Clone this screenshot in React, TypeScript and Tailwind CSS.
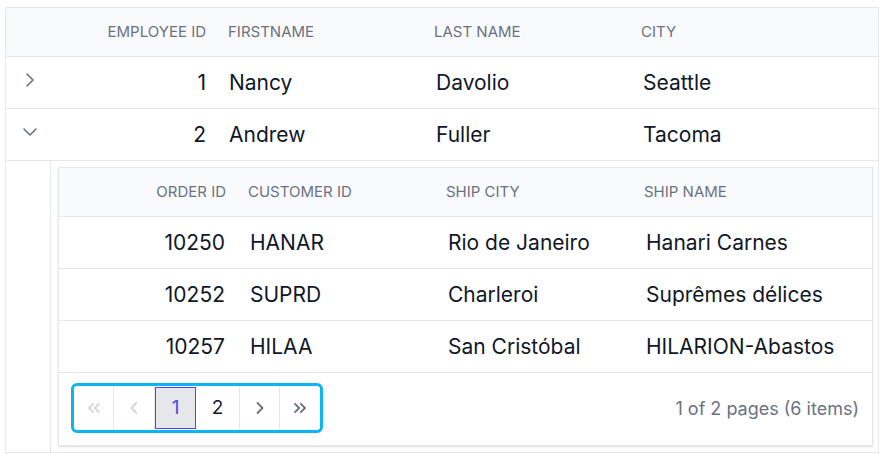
import React from "react";
import { ChevronRight, ChevronDown, ChevronLeft, ChevronsLeft, ChevronsRight } from "lucide-react";

const employees = [
  { id: 1, first: "Nancy", last: "Davolio", city: "Seattle", open: false },
  { id: 2, first: "Andrew", last: "Fuller", city: "Tacoma", open: true },
];

const orders = [
  { id: 10250, cust: "HANAR", city: "Rio de Janeiro", name: "Hanari Carnes" },
  { id: 10252, cust: "SUPRD", city: "Charleroi", name: "Suprêmes délices" },
  { id: 10257, cust: "HILAA", city: "San Cristóbal", name: "HILARION-Abastos" },
];

export default function App() {
  return (
    <div className="w-[880px] h-[454px] bg-white overflow-hidden" style={{ fontFamily: "Inter, 'Noto Sans', sans-serif" }}>
      <div className="mt-[7px] ml-[5px] w-[874px] border border-gray-200">
        {/* header */}
        <div className="flex h-[49px] items-center bg-gray-50 border-b border-gray-200 text-[15px] text-gray-500 uppercase">
          <div className="w-[44px] shrink-0" />
          <div className="w-[168px] shrink-0 text-right pr-3">Employee ID</div>
          <div className="w-[206px] shrink-0 pl-[10px]">FirstName</div>
          <div className="w-[207px] shrink-0 pl-[10px]">Last Name</div>
          <div className="flex-1 pl-[10px]">City</div>
        </div>
        {employees.map((e) => (
          <div key={e.id} className="flex h-[52px] items-center border-b border-gray-200 text-[21px] text-gray-900 pt-[1px]">
            <div className="w-[44px] shrink-0 flex justify-center pl-[3px] pb-[6px] text-gray-500">
              {e.open ? <ChevronDown size={24} strokeWidth={1.6} /> : <ChevronRight size={24} strokeWidth={1.6} />}
            </div>
            <div className="w-[168px] shrink-0 text-right pr-3">{e.id}</div>
            <div className="w-[206px] shrink-0 pl-[11px]">{e.first}</div>
            <div className="w-[207px] shrink-0 pl-3">{e.last}</div>
            <div className="flex-1 pl-3">{e.city}</div>
          </div>
        ))}
        {/* detail row */}
        <div className="flex">
          <div className="w-[44px] shrink-0" />
          <div className="flex-1 border-l border-gray-200 pl-[7px] pr-[5px] pt-[6px] pb-[6px]">
            <div className="border border-gray-200 shadow-sm">
              <div className="flex h-[49px] items-center bg-gray-50 border-b border-gray-200 text-[15px] text-gray-500 uppercase">
                <div className="w-[179px] shrink-0 text-right pr-3">Order ID</div>
                <div className="w-[198px] shrink-0 pl-[10px]">Customer ID</div>
                <div className="w-[198px] shrink-0 pl-[10px]">Ship City</div>
                <div className="flex-1 pl-[10px]">Ship Name</div>
              </div>
              {orders.map((o) => (
                <div key={o.id} className="flex h-[52px] items-center border-b border-gray-200 text-[21px] text-gray-900 pt-[1px]">
                  <div className="w-[179px] shrink-0 text-right pr-[13px]">{o.id}</div>
                  <div className="w-[198px] shrink-0 pl-3">{o.cust}</div>
                  <div className="w-[198px] shrink-0 pl-3">{o.city}</div>
                  <div className="flex-1 pl-3">{o.name}</div>
                </div>
              ))}
              <div className="flex h-[72px] items-center justify-between pl-3 pr-[13px] pb-[2px]">
                <div className="flex h-[50px] border-[3px] border-[#0bb4f2] rounded-[6px] overflow-hidden">
                  <div className="w-[40px] flex items-center justify-center border-r border-gray-200 text-gray-300">
                    <ChevronsLeft size={20} strokeWidth={2.2} />
                  </div>
                  <div className="w-[41px] flex items-center justify-center border-r border-gray-200 text-gray-300">
                    <ChevronLeft size={20} strokeWidth={2.2} />
                  </div>
                  <div className="w-[41px] my-[1px] flex items-center justify-center border border-[#4f46e5] bg-gray-200 text-[#4f46e5] text-[19px]">
                    1
                  </div>
                  <div className="w-[44px] flex items-center justify-center border-r border-gray-200 text-gray-900 text-[19px]">
                    2
                  </div>
                  <div className="w-[40px] flex items-center justify-center border-r border-gray-200 text-gray-500">
                    <ChevronRight size={20} strokeWidth={2.2} />
                  </div>
                  <div className="w-[40px] flex items-center justify-center text-gray-500">
                    <ChevronsRight size={20} strokeWidth={2.2} />
                  </div>
                </div>
                <div className="text-[18px] text-gray-500">1 of 2 pages (6 items)</div>
              </div>
            </div>
          </div>
        </div>
      </div>
    </div>
  );
}
